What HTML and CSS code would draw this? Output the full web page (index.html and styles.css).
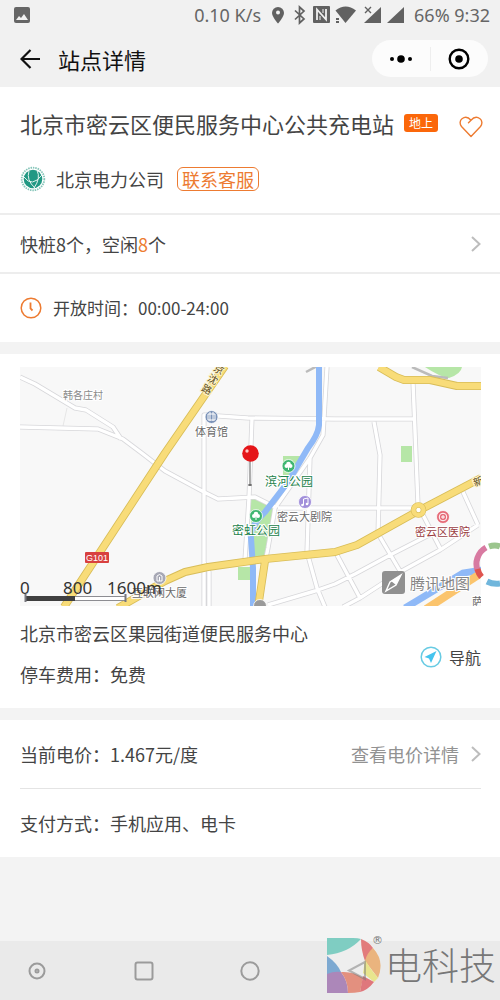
FILE: index.html
```html
<!DOCTYPE html>
<html lang="zh-CN">
<head>
<meta charset="utf-8">
<meta name="viewport" content="width=device-width, initial-scale=1">
<title>站点详情</title>
<link rel="stylesheet" href="styles.css">
</head>
<body>
<div class="status">
  <svg class="status-photo" width="16" height="16" viewBox="0 0 16 16"><rect width="16" height="16" rx="2" fill="#666"/><path d="M2 13l3-4 2 2 3-4 4 6z" fill="#f1f1f1"/></svg>
  <span class="status-speed">0.10 K/s</span>
  <svg width="134" height="20" viewBox="271 5 134 20" fill="#616161">
    <path d="M278 7a6 6 0 0 0-6 6c0 4 6 10.500 6 10.500s6-6.500 6-10.500a6 6 0 0 0-6-6z"/><circle cx="278" cy="12.500" r="2" fill="#f1f1f1"/>
    <path d="M295 10.500l9 8.500-4.500 4V7l4.500 4-9 8.500" fill="none" stroke="#616161" stroke-width="1.700"/>
    <rect x="313" y="6" width="17" height="17" rx="1"/><path d="M317 20V9.500l9 10V9" fill="none" stroke="#f1f1f1" stroke-width="1.800"/><path d="M320 20v-4M323 9v4" fill="none" stroke="#f1f1f1" stroke-width="1"/>
    <path d="M335.500 10.500q10-8 20.500 0L345.500 23z"/><path d="M336 18h3v2h-3zM336 21h3v2h-3z"/>
    <path d="M381 7v16h-17z"/><path d="M365 7l6 6M371 7l-6 6" stroke="#616161" stroke-width="1.400"/>
    <path d="M404 7v16h-17z"/>
  </svg>
  <span class="status-time">66% 9:32</span>
</div>
<header class="topbar">
  <button class="back" aria-label="返回"><svg width="20" height="20" viewBox="0 0 20 20"><path d="M20 10H2M10.500 1L1.500 10l9 9" fill="none" stroke="#111" stroke-width="2.200"/></svg></button>
  <h1>站点详情</h1>
  <div class="capsule">
    <button aria-label="更多"><svg width="24" height="10" viewBox="0 0 24 10"><circle cx="3" cy="5" r="2"/><circle cx="12" cy="5" r="3.800"/><circle cx="21" cy="5" r="2"/></svg></button>
    <button aria-label="关闭"><svg width="22" height="22" viewBox="0 0 22 22"><circle cx="11" cy="11" r="9.300" fill="none" stroke="#000" stroke-width="2.400"/><circle cx="11" cy="11" r="3.800"/></svg></button>
  </div>
</header>
<main>
  <section class="card">
    <div class="station">
      <div class="name-row">
        <h2>北京市密云区便民服务中心公共充电站</h2>
        <span class="tag">地上</span>
        <button class="heart" aria-label="收藏"><svg width="24" height="22" viewBox="0 0 24 22"><path d="M12 20.500L2.500 10.500C.500 8 .700 4.500 3 2.700 6 .500 9.500 1.300 12 4.300 14.500 1.300 18 .500 21 2.700c2.300 1.800 2.500 5.300.500 7.800zM12 4.300L9.500 6.800" fill="none" stroke="#ed7b31" stroke-width="1.400" stroke-linejoin="round" stroke-linecap="round"/></svg></button>
      </div>
      <div class="company-row">
        <svg width="26" height="26" viewBox="0 0 26 26"><circle cx="13" cy="13" r="11.300" fill="none" stroke="#86c5b9" stroke-width="1.800" stroke-dasharray="1.500 .900"/><circle cx="13" cy="13" r="9.300" fill="#219883"/><path d="M4 11Q12 22 22 9M9 5Q6 14 15 22M17 4.500Q21 12 14 22" fill="none" stroke="#e4f3ef" stroke-width="1"/></svg>
        <span>北京电力公司</span>
        <button class="service">联系客服</button>
      </div>
    </div>
    <a class="row piles" href="#piles"><span>快桩8个，空闲<b>8</b>个</span><svg class="chev" width="10" height="16" viewBox="0 0 10 16"><path d="M1 1l7.500 7L1 15"/></svg></a>
    <div class="hours"><svg width="22" height="22" viewBox="0 0 22 22" fill="none" stroke="#ed7b31"><circle cx="11" cy="11" r="9.800" stroke-width="1.500"/><path d="M10.500 5.500v6l2 2" stroke-width="1.800"/></svg><span>开放时间：00:00-24:00</span></div>
  </section>

  <section class="card location">
    <svg class="map" viewBox="20 367 461 239" role="img" aria-label="地图">
      <defs>
        <g id="minor" fill="none" stroke-linejoin="round">
          <path d="M20 377l15 7 40 24 11 2 27 17 8 12M20 427l78 2 25 10 20 15 22 17 37 20 16 8 37-2 22 11M204 606V415l44 3 87 1h78M252 418l-3 80-4 62M204 562l5 10v34M327 367l-4 68-13 23-35 50-7 40-3 15M310 458l-3 94 10 36 8 19M278 508h140M413 382l5 123M374 422l6 33-2 80M268 605l47-14 20-7 20-10 37-20 45-23M343 607l17-9 40-26 40-22 38-25M337 555l23 43M380 537l20 34M423 515l17 33M463 492l15 33"/>
        </g>
      </defs>
      <rect x="20" y="367" width="461" height="239" fill="#f8f8f8"/>
      <path d="M67 408l-4 18" stroke="#e7e7e7"/>
      <g fill="#b6e6a7">
        <path d="M283 456h20l-14 24h-6zM250 498h12l12 12-8 47h-13zM238 567h14v13h-14zM401 446h11v16h-11zM425 367h37q-1 7-13 11-9-1-24-11z"/>
      </g>
      <use href="#minor" stroke="#d7d7da" stroke-width="5"/>
      <use href="#minor" stroke="#fff" stroke-width="3.400"/>
      <path d="M306 372l15-8M412 367l20 9 16 2" stroke="#bbb" stroke-width="2.500" fill="none"/>
      <path d="M319 367v58q-1 10-11 23l-20 34-23 30q-16 16-14 26l2 30v39" fill="none" stroke="#8fb9f7" stroke-width="6"/>
      <path d="M405 608l58-35 20-3" fill="none" stroke="#8fb9f7" stroke-width="7"/>
      <path d="M426 609l57-37" stroke="#fbc46d" stroke-width="8"/>
      <g fill="none" stroke-linejoin="round">
        <path d="M64 607L165 453l60-87M118 608l47-27 20-9 23-5 57-8 70-7 22-7 61-34 63-33M265 561l-7 47M379 367l17 10 8 3 26 0 27 6h26" stroke="#d8bd58" stroke-width="8"/>
        <path d="M64 607L165 453l60-87M118 608l47-27 20-9 23-5 57-8 70-7 22-7 61-34 63-33M265 561l-7 47M379 367l17 10 8 3 26 0 27 6h26" stroke="#f8dc79" stroke-width="6.300"/>
        <circle cx="418.500" cy="510" r="5" fill="#fff" stroke="#d8bd58" stroke-width="5.500"/>
        <circle cx="418.500" cy="510" r="5" stroke="#f8dc79" stroke-width="4.300"/>
      </g>
      <rect x="85" y="552" width="24" height="11" rx="1" fill="#d8403f"/><text x="97" y="561" class="m-shield">G101</text>
      <g stroke="#fff" stroke-width=".800">
        <circle cx="211.500" cy="417" r="6.500" fill="#7c93b8"/><circle cx="288.500" cy="466" r="6.500" fill="#3fb671"/><circle cx="256" cy="516" r="6.500" fill="#3fb671"/><circle cx="305" cy="502" r="6.500" fill="#a18fda"/><circle cx="443" cy="517" r="6.500" fill="#e66b78"/><circle cx="159.500" cy="578" r="6.500" fill="#a7a8b5"/><circle cx="260" cy="606" r="6.500" fill="#9a9a9a"/>
      </g>
      <path d="M208 414h7v6h-7zM210 412v9M213 412v9" fill="none" stroke="#fff"/>
      <g fill="#fff"><circle cx="286.500" cy="466" r="2"/><circle cx="290.500" cy="466" r="2"/><circle cx="288.500" cy="464" r="2.300"/><path d="M288 466h1v4h-1z"/><circle cx="254" cy="516" r="2"/><circle cx="258" cy="516" r="2"/><circle cx="256" cy="514" r="2.300"/><path d="M255.500 516h1v4h-1z"/></g>
      <path d="M303.500 505v-6l4.500-1v6" stroke="#fff" fill="none"/><circle cx="302.500" cy="505" r="1.300" fill="#fff"/><circle cx="307" cy="504" r="1.300" fill="#fff"/>
      <circle cx="443" cy="517" r="3.800" fill="none" stroke="#fff"/><path d="M443 515v4M441 517h4" stroke="#fff"/>
      <path d="M157 581v-5l2.500-1.500 2.500 1.500v5zM159.500 577v4" fill="none" stroke="#fff"/>
      <g class="m-label">
        <text x="63" y="399" class="m-village">韩各庄村</text>
        <text x="195" y="436">体育馆</text>
        <text x="277" y="521">密云大剧院</text>
        <text x="132" y="597">互联网大厦</text>
        <text x="265" y="486" class="m-park">滨河公园</text>
        <text x="232" y="535" class="m-park">密虹公园</text>
        <text x="415" y="536" class="m-hospital">密云区医院</text>
        <text x="472" y="606">萨</text>
      </g>
      <g class="m-road">
        <text x="214" y="373" transform="rotate(28 219 369)">京</text><text x="208" y="383" transform="rotate(28 213 379)">沈</text><text x="202" y="393" transform="rotate(28 207 389)">路</text><text x="473" y="485" transform="rotate(-20 478 481)">新</text>
      </g>
      <path d="M250 460v25" stroke="#999" stroke-width="1.600"/><ellipse cx="250" cy="485" rx="2" ry="1" fill="#666"/>
      <circle cx="250.500" cy="453.500" r="8.300" fill="#e51519"/><circle cx="247" cy="451" r="1.700" fill="#ffc9c6"/>
      <g class="m-scale"><text x="20" y="594">0</text><text x="63" y="594">800</text><text x="107" y="594">1600m</text></g>
      <rect x="25.500" y="596.500" width="100" height="4" fill="#fff" stroke="#8d8d92"/><path d="M25 596h50v5H25z" fill="#404040"/><path d="M25.500 594v8M125.500 594v8" stroke="#77777d" stroke-width="2"/>
      <rect x="382" y="571" width="23" height="23" rx="3" fill="#909090"/><path d="M401 575l-5 10-10 6 4-9z" fill="none" stroke="#fff" stroke-width="1.400"/><path d="M401 575l-5 10-5-4z" fill="#fff"/>
      <text x="410" y="589" class="m-brand">腾讯地图</text>
    </svg>
    <div class="address">
      <div><p>北京市密云区果园街道便民服务中心</p><p>停车费用：免费</p></div>
      <a class="navigate" href="#navigate"><svg width="22" height="22" viewBox="0 0 22 22"><circle cx="11" cy="11" r="9.800" fill="none" stroke="#68cbe3" stroke-width="1.500"/><path d="M16.500 5L4.500 11l4.500 1.500 2 4.500z" fill="#45c4ee"/></svg><span>导航</span></a>
    </div>
  </section>

  <section class="card payment">
    <div class="row price"><span>当前电价：1.467元/度</span><a class="detail" href="#price"><span>查看电价详情</span><svg class="chev" width="10" height="16" viewBox="0 0 10 16"><path d="M1 1l7.500 7L1 15"/></svg></a></div>
    <div class="row">支付方式：手机应用、电卡</div>
  </section>
</main>
<nav class="sysnav" aria-label="系统导航">
  <button aria-label="隐藏"><svg width="20" height="20" viewBox="0 0 20 20"><circle cx="10" cy="10" r="7.500"/><circle cx="10" cy="10" r="1.500"/></svg></button>
  <button aria-label="最近"><svg width="20" height="20" viewBox="0 0 20 20"><rect x="1.500" y="1.500" width="17" height="17" rx="2"/></svg></button>
  <button aria-label="主页"><svg width="20" height="20" viewBox="0 0 20 20"><circle cx="10" cy="10" r="8.700"/></svg></button>
  <button aria-label="后退"><svg width="20" height="20" viewBox="0 0 20 20"><path d="M17 2v16L2 10z"/></svg></button>
</nav>
<svg class="float-ring" width="27" height="46" viewBox="473 542 27 46" fill="none" stroke-width="6"><path d="M486 547.500a19 19 0 0 0-8 24" stroke="#d87aa1"/><path d="M477.500 569a19 19 0 0 0 4 8" stroke="#df5550"/><path d="M489 546.500q6-2 11 0" stroke="#9bc58d"/><path d="M487 581.500q6 3 13 2" stroke="#70b6dc"/></svg>
<div class="watermark">
  <svg width="58" height="58" viewBox="326 936 58 58">
    <path d="M327 938h27a26 27.500 0 0 1 0 55h-27z" fill="#eee"/>
    <path d="M327 938h26q5 0 8 1-13 14-34 16z" fill="#7fcdc2"/>
    <path d="M361 939q8 3 12 9l-8 13q-4-11-4-22z" fill="#e27b7c"/>
    <path d="M373 948q12 13 5 30l-13-17q2-8 8-13z" fill="#eab47e"/>
    <path d="M365 960q6 10 13 18l-4 4-11-9z" fill="#e8e58d"/>
    <path d="M327 956q10 7 14 16l-14 3z" fill="#7da9d1"/>
    <path d="M327 974q7-3 14-2 7 9 7 21h-21z" fill="#ac87b9"/>
    <path d="M341 972q12-1 22 6l-3 14q-5 1-12 1 0-12-7-21z" fill="#e3907f"/>
    <path d="M363 976l11 6q-6 8-14 10z" fill="#df777c"/>
    <path d="M365 962v17l-16-8.500z" fill="none" stroke="#777" stroke-opacity=".5" stroke-width="2"/>
  </svg>
  <sup>®</sup><span>电科技</span>
</div>
</body>
</html>
```
FILE: styles.css
```css
* { box-sizing: border-box; }
body {
  margin: 0;
  min-height: 100vh;
  display: flex;
  flex-direction: column;
  position: relative;
  overflow-x: hidden;
  background: #f3f3f3;
  color: #444;
  font: 18px/28px "Noto Sans CJK SC", sans-serif;
}
button { padding: 0; border: 0; background: none; font: inherit; color: inherit; }
a { color: inherit; text-decoration: none; }
h1, h2, p { margin: 0; font-weight: 400; }
svg { display: block; flex: none; }

.status {
  display: flex;
  align-items: center;
  height: 30px;
  padding: 0 10px 0 14px;
  background: #f1f1f1;
  color: #666;
  font: 18px/30px "Noto Sans", sans-serif;
  white-space: nowrap;
}
.status-photo { margin-right: auto; }
.status-speed { margin-right: 10px; }
.status-time { margin-left: 9px; }

.topbar {
  display: flex;
  align-items: center;
  height: 57px;
  padding: 0 12px 0 20px;
  background: #f1f1f1;
  color: #111;
}
.back { margin-right: 18px; }
.topbar h1 { font-size: 22px; flex: 1; }
.capsule {
  display: flex;
  align-items: center;
  width: 116px;
  height: 37px;
  border-radius: 20px;
  background: #fcfcfc;
}
.capsule button { flex: 1; height: 24px; display: flex; justify-content: center; align-items: center; }
.capsule button + button { border-left: 1px solid #eee; }

.card { background: #fff; }
.card + .card { margin-top: 12px; }
.station { padding: 19px 17px 17px 20px; border-bottom: 2px solid #ededed; }
.name-row { display: flex; align-items: center; height: 34px; }
.name-row h2 { font-size: 22px; white-space: nowrap; }
.tag {
  margin-left: 10px;
  padding: 0 5px;
  border-radius: 3px;
  background: #fb670a;
  color: #fff;
  font-size: 12px;
  line-height: 18px;
  white-space: nowrap;
}
.heart { margin: 8px 0 0 auto; }
.company-row { display: flex; align-items: center; height: 34px; margin-top: 22px; }
.company-row span { margin: 0 13px 0 10px; }
.service {
  padding: 0 4px;
  border: 1px solid #ed7b31;
  border-radius: 6px;
  color: #ed7b31;
  line-height: 22px;
}
.row { display: flex; align-items: center; justify-content: space-between; }
.chev path { fill: none; stroke: #bdbdbd; stroke-width: 2; }
.piles { height: 59px; padding: 0 19px 0 20px; border-bottom: 2px solid #ededed; }
.piles b { font-weight: 400; color: #ed7b31; }
.hours { display: flex; align-items: center; gap: 11px; height: 68px; padding: 0 20px; font-size: 17px; }

.location { padding: 13px 19px 13px 20px; }
.map { width: 100%; height: auto; }
.m-label { font-size: 11px; fill: #6a6a6a; stroke: #fff; stroke-width: 2px; paint-order: stroke; }
.m-village { font-size: 10px; fill: #8a8a8a; }
.m-park { font-size: 12px; fill: #24824b; }
.m-hospital { fill: #9a3d42; }
.m-road { font-size: 10px; fill: #5b4a1c; stroke: #fdf3c8; stroke-width: 2px; paint-order: stroke; }
.m-shield { font: 9px "Liberation Sans", sans-serif; fill: #fff; text-anchor: middle; }
.m-scale { font: 17px "Noto Sans", sans-serif; fill: #333; }
.m-brand { font-size: 15px; fill: #858585; stroke: #fff; stroke-width: 2px; paint-order: stroke; }
.address { display: flex; justify-content: space-between; align-items: center; padding-top: 7px; }
.address p { line-height: 41px; }
.navigate { display: flex; align-items: center; gap: 7px; margin-top: 6px; font-size: 16px; }

.payment { padding: 0 19px 0 20px; }
.payment .row { height: 68px; }
.payment .price { height: 69px; border-bottom: 1px solid #e4e4e4; }
.payment .detail { display: flex; align-items: center; gap: 12px; color: #929292; }

.sysnav {
  display: flex;
  align-items: center;
  justify-content: space-between;
  margin-top: auto;
  height: 59px;
  padding: 0 133px 0 27px;
  background: #eaeaea;
}
.sysnav svg { fill: none; stroke: #9b9b9b; stroke-width: 2; }

.float-ring { position: absolute; right: 0; top: 542px; }
.watermark {
  position: absolute;
  right: 4px;
  bottom: 6px;
  display: flex;
  color: #777;
  pointer-events: none;
}
.watermark sup { width: 8px; margin-left: -12px; font: 11px/10px "DejaVu Sans", sans-serif; align-self: flex-start; }
.watermark span { margin-left: 5px; font-size: 37px; line-height: 56px; font-weight: 300; }
```
